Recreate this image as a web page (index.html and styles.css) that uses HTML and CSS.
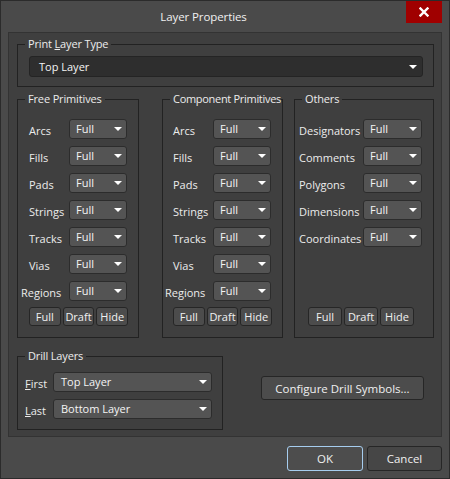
FILE: index.html
```html
<!DOCTYPE html>
<html lang="en">
<head>
  <meta charset="UTF-8">
  <title>Layer Properties</title>
  <link rel="stylesheet" href="styles.css">
</head>
<body>

  <div class="window">
    <div class="titlebar">
      <span class="title">Layer Properties</span>
      <button class="close" aria-label="Close">
        <svg width="10" height="10" viewBox="0 0 10 10">
          <path d="M1.5 1.5 L8.5 8.5 M8.5 1.5 L1.5 8.5" stroke="#fff" stroke-width="2.4" stroke-linecap="square"/>
        </svg>
      </button>
    </div>

    <div class="panel">
      <fieldset class="group print-type">
        <legend>Print <u>L</u>ayer Type</legend>
        <div class="group-body">
          <div class="combo dark">Top Layer<span class="arrow"></span></div>
        </div>
      </fieldset>

      <div class="columns">
        <fieldset class="group free">
          <legend>Free Primitives</legend>
          <div class="group-body">
            <div class="rows">
              <div class="row"><span class="label">Arcs</span><div class="combo">Full<span class="arrow"></span></div></div>
              <div class="row"><span class="label">Fills</span><div class="combo">Full<span class="arrow"></span></div></div>
              <div class="row"><span class="label">Pads</span><div class="combo">Full<span class="arrow"></span></div></div>
              <div class="row"><span class="label">Strings</span><div class="combo">Full<span class="arrow"></span></div></div>
              <div class="row"><span class="label">Tracks</span><div class="combo">Full<span class="arrow"></span></div></div>
              <div class="row"><span class="label">Vias</span><div class="combo">Full<span class="arrow"></span></div></div>
              <div class="row"><span class="label wide">Regions</span><div class="combo">Full<span class="arrow"></span></div></div>
            </div>
            <div class="btn-row">
              <button class="btn small">Full</button>
              <button class="btn small">Draft</button>
              <button class="btn small">Hide</button>
            </div>
          </div>
        </fieldset>

        <fieldset class="group component">
          <legend>Component Primitives</legend>
          <div class="group-body">
            <div class="rows">
              <div class="row"><span class="label">Arcs</span><div class="combo">Full<span class="arrow"></span></div></div>
              <div class="row"><span class="label">Fills</span><div class="combo">Full<span class="arrow"></span></div></div>
              <div class="row"><span class="label">Pads</span><div class="combo">Full<span class="arrow"></span></div></div>
              <div class="row"><span class="label">Strings</span><div class="combo">Full<span class="arrow"></span></div></div>
              <div class="row"><span class="label">Tracks</span><div class="combo">Full<span class="arrow"></span></div></div>
              <div class="row"><span class="label">Vias</span><div class="combo">Full<span class="arrow"></span></div></div>
              <div class="row"><span class="label wide">Regions</span><div class="combo">Full<span class="arrow"></span></div></div>
            </div>
            <div class="btn-row">
              <button class="btn small">Full</button>
              <button class="btn small">Draft</button>
              <button class="btn small">Hide</button>
            </div>
          </div>
        </fieldset>

        <fieldset class="group others">
          <legend>Others</legend>
          <div class="group-body">
            <div class="rows">
              <div class="row"><span class="label">Designators</span><div class="combo">Full<span class="arrow"></span></div></div>
              <div class="row"><span class="label">Comments</span><div class="combo">Full<span class="arrow"></span></div></div>
              <div class="row"><span class="label">Polygons</span><div class="combo">Full<span class="arrow"></span></div></div>
              <div class="row"><span class="label">Dimensions</span><div class="combo">Full<span class="arrow"></span></div></div>
              <div class="row"><span class="label">Coordinates</span><div class="combo">Full<span class="arrow"></span></div></div>
            </div>
            <div class="btn-row">
              <button class="btn small">Full</button>
              <button class="btn small">Draft</button>
              <button class="btn small">Hide</button>
            </div>
          </div>
        </fieldset>
      </div>

      <div class="drill-row">
        <fieldset class="group drill">
          <legend>Drill Layers</legend>
          <div class="group-body">
            <div class="row"><span class="label"><u>F</u>irst</span><div class="combo">Top Layer<span class="arrow"></span></div></div>
            <div class="row"><span class="label"><u>L</u>ast</span><div class="combo">Bottom Layer<span class="arrow"></span></div></div>
          </div>
        </fieldset>
        <button class="btn configure">Configure Drill Symbols...</button>
      </div>
    </div>

    <div class="footer">
      <button class="btn ok">OK</button>
      <button class="btn cancel">Cancel</button>
    </div>
  </div>

</body>
</html>
```

FILE: styles.css
```css
* {
  box-sizing: border-box;
}

body {
  margin: 0;
  background-color: #4a4a4a;
  font-family: 'Open Sans', 'Noto Sans', sans-serif;
  font-size: 11px;
  color: #ececec;
}

.window {
  width: 450px;
  height: 479px;
  border: 1px solid #2b2b2b;
  background-color: #4a4a4a;
  display: flex;
  flex-direction: column;
}

/* Title bar - title is centred in the space left of the close button */
.titlebar {
  position: relative;
  height: 31px;
  display: flex;
  justify-content: center;
  align-items: center;
  padding: 0 43px 1px 0;
}

.title {
  font-size: 11.5px;
  letter-spacing: -0.1px;
  color: #f0f0f0;
}

.close {
  position: absolute;
  top: 0;
  right: 7px;
  width: 36px;
  height: 22px;
  border: none;
  padding: 0;
  background-color: #a00000;
  display: flex;
  justify-content: center;
  align-items: center;
}

/* Main panel */
.panel {
  margin: 0 7px;
  padding: 3px 7px 6px 8px;
  background-color: #3f3f3f;
  border: 1px solid #333;
}

.group {
  margin: 0;
  padding: 0;
  min-width: 0;
  border: 1px solid #222;
}

.group legend {
  margin-left: 7px;
  padding: 0 3px;
  line-height: 16px;
  white-space: nowrap;
  letter-spacing: -0.15px;
  color: #ececec;
}

.print-type .group-body {
  padding: 4px 10px 9px 11px;
}

/* Combo boxes */
.combo {
  position: relative;
  height: 20px;
  line-height: 18px;
  padding-left: 6px;
  background-color: #545454;
  border: 1px solid #2c2c2c;
  border-radius: 3px;
  color: #f4f4f4;
  white-space: nowrap;
}

.combo.dark {
  height: 21px;
  line-height: 19px;
  padding-left: 9px;
  background-color: #2e2e2e;
  border-color: #242424;
}

.arrow {
  position: absolute;
  right: 4px;
  top: 7px;
  width: 0;
  height: 0;
  border-left: 4px solid transparent;
  border-right: 4px solid transparent;
  border-top: 4px solid #fff;
}

.combo.dark .arrow {
  right: 5px;
  top: 8px;
}

/* Primitive columns */
.columns {
  display: flex;
  margin-top: 4px;
}

.free {
  width: 122px;
}

.component {
  width: 121px;
  margin-left: 23px;
}

.component legend {
  padding-right: 0;
  max-width: 112px;
  overflow: hidden;
  letter-spacing: -0.3px;
}

.others {
  width: 140px;
  margin-left: 11px;
}

.columns .group-body {
  height: 230px;
  padding: 12px 10px 10px 11px;
  display: flex;
  flex-direction: column;
}

.component .group-body {
  padding-left: 10px;
}

.others .group-body {
  padding-left: 4px;
}

.rows {
  display: flex;
  flex-direction: column;
  gap: 7px;
}

.row {
  display: flex;
  align-items: center;
}

.label {
  width: 40px;
  flex-shrink: 0;
  white-space: nowrap;
  padding-top: 2px;
}

.label.wide {
  width: 48px;
  margin-left: -8px;
}

.columns .combo {
  width: 58px;
}

.others .label {
  width: 64px;
}

.others .combo {
  width: 59px;
}

.btn-row {
  display: flex;
  justify-content: center;
  gap: 2px;
  margin-top: auto;
  margin-bottom: 1px;
}

/* Buttons */
.btn {
  font-family: inherit;
  font-size: 11px;
  color: #f0f0f0;
  background-color: #4c4c4c;
  border: 1px solid #262626;
  border-radius: 3px;
  padding: 0;
}

.btn.small {
  width: 34px;
  height: 19px;
  line-height: 16px;
}

/* Drill layers */
.drill-row {
  display: flex;
  align-items: center;
  margin-top: 10px;
}

.drill {
  width: 206px;
}

.drill .group-body {
  padding: 8px 10px 10px 7px;
  display: flex;
  flex-direction: column;
  gap: 7px;
}

.drill .label {
  width: 28px;
}

.drill .combo {
  flex: 1;
  padding-left: 7px;
}

.configure {
  width: 163px;
  height: 24px;
  margin-left: auto;
  margin-right: 10px;
  margin-top: -2px;
  font-size: 11.5px;
}

/* Footer */
.footer {
  display: flex;
  justify-content: flex-end;
  gap: 4px;
  padding: 9px 7px 0 0;
}

.ok {
  width: 76px;
  height: 25px;
  border-color: #a6cdef;
  background-color: #4d4d4d;
  font-size: 11.5px;
}

.cancel {
  width: 75px;
  height: 25px;
  background-color: #464646;
  font-size: 11.5px;
}
```
